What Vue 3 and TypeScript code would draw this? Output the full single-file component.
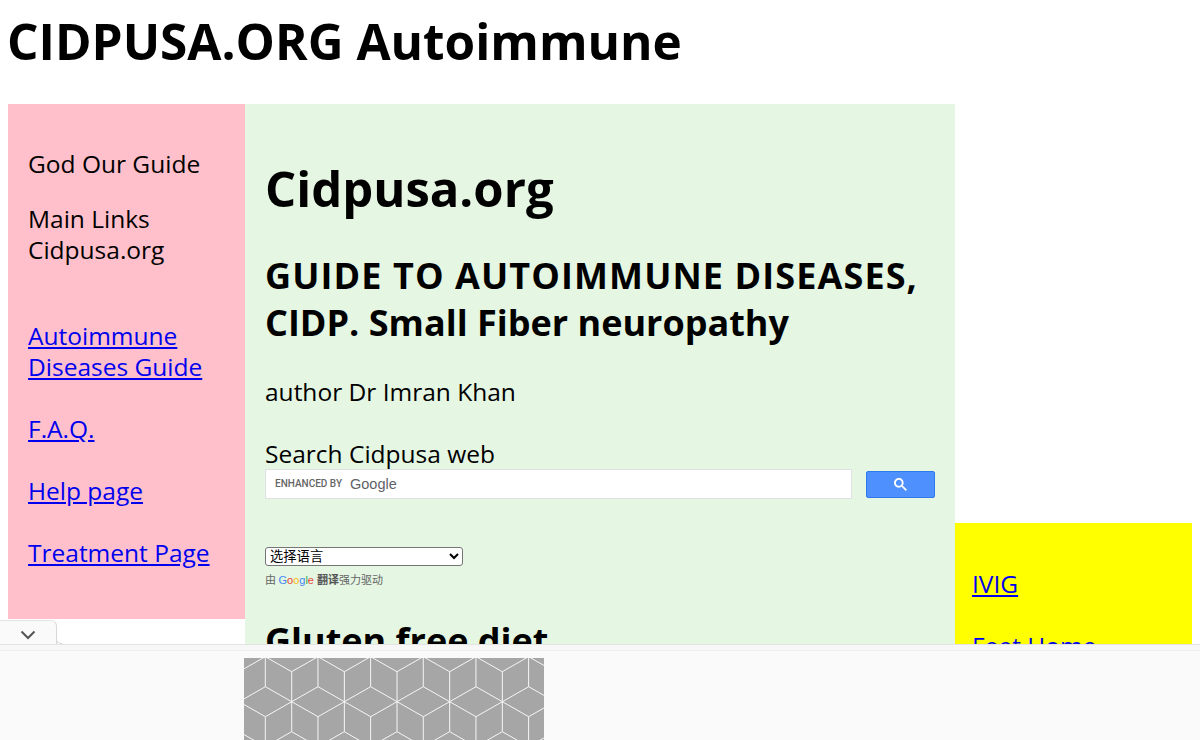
<template>
  <div class="page">
    <h1 class="site-title">CIDPUSA.ORG Autoimmune</h1>

    <div class="columns">
      <!-- left nav -->
      <aside class="left">
        <p>God Our Guide</p>
        <p>Main Links<br />Cidpusa.org<br /><br /></p>
        <p>
          <a href="#">Autoimmune Diseases Guide</a><br /><br />
          <a href="#">F.A.Q.</a><br /><br />
          <a href="#">Help page</a><br /><br />
          <a href="#">Treatment Page</a>
        </p>
      </aside>

      <main class="center">
        <h1 class="main-title">Cidpusa.org</h1>
        <h2><span class="caps">GUIDE TO AUTOIMMUNE DISEASES,</span> CIDP. Small Fiber neuropathy</h2>
        <p>author Dr Imran Khan</p>
        <div class="search-label">Search Cidpusa web</div>
        <div class="search">
          <div class="search-box">
            <span class="enhanced">ENHANCED BY</span>
            <span class="google-gray">Google</span>
          </div>
          <button class="search-btn" aria-label="search">
            <svg width="13" height="13" viewBox="0 0 13 13">
              <path fill="#fff" d="m4.8495 7.8226c0.82666 0 1.5262-0.29146 2.0985-0.87438 0.57232-0.58292 0.86378-1.2877 0.87438-2.1144 0.010599-0.82666-0.28086-1.5262-0.87438-2.0985-0.59352-0.57232-1.293-0.86378-2.0985-0.87438-0.8055-0.010599-1.5103 0.28086-2.1144 0.87438-0.60414 0.59352-0.8956 1.293-0.87438 2.0985 0.021197 0.8055 0.31266 1.5103 0.87438 2.1144 0.56172 0.60414 1.2665 0.8956 2.1144 0.87438zm4.4695 0.2115 3.681 3.6819-1.259 1.284-3.6817-3.7 0.0019784-0.69479-0.090043-0.098846c-0.87973 0.76087-1.92 1.1413-3.1207 1.1413-1.3553 0-2.5025-0.46363-3.4417-1.3909s-1.4088-2.0686-1.4088-3.4239c0-1.3553 0.4696-2.4966 1.4088-3.4239 0.9392-0.92727 2.0864-1.3969 3.4417-1.4088 1.3553-0.011889 2.4906 0.45771 3.406 1.4088 0.9154 0.95107 1.379 2.0924 1.3909 3.4239 0 1.2126-0.38043 2.2588-1.1413 3.1385l0.098834 0.090049z"/>
            </svg>
          </button>
        </div>

        <div class="translate">
          <select class="lang">
            <option>选择语言</option>
          </select>
          <div class="powered">
            由 <span class="g-logo"><i class="b">G</i><i class="r">o</i><i class="y">o</i><i class="b">g</i><i class="g">l</i><i class="r">e</i></span>
            <b>翻译</b>强力驱动
          </div>
        </div>

        <h2 class="gluten">Gluten free diet</h2>
      </main>

      <aside class="right">
        <p>
          <a href="#">IVIG</a><br /><br />
          <a href="#">Feet Home</a>
        </p>
      </aside>
    </div>

    <!-- anchor ad over the bottom of the page -->
    <div class="anchor">
      <div class="anchor-tab">
        <svg width="16" height="10" viewBox="0 0 16 10">
          <path d="M1.5 1.5 8 8l6.5-6.5" fill="none" stroke="#555" stroke-width="2" />
        </svg>
      </div>
      <div class="anchor-strip"></div>
      <div class="anchor-body">
        <svg class="ad" width="300" height="82" viewBox="0 0 300 82">
          <rect width="300" height="82" fill="#a6a6a6" />
          <path :d="cubeLines" stroke="#f6f6f6" stroke-width="1" fill="none" />
        </svg>
      </div>
    </div>
  </div>
</template>

<script setup lang="ts">
// tumbling cube lines of the ad: six spokes round each node of a triangular grid
const dx = 26.33
const dy = 45
const spoke = 30

function buildCubeLines(): string {
  let d = ''
  for (let row = 0; row < 4; row++) {
    const y = -1.3 + row * dy
    const offset = row % 2 === 0 ? 21.3 : 47.7
    for (let col = -1; col < 7; col++) {
      const x = offset + col * dx * 2
      d += `M${x} ${y - spoke}V${y + spoke}`
      d += `M${x - dx} ${y - 15}L${x + dx} ${y + 15}`
      d += `M${x - dx} ${y + 15}L${x + dx} ${y - 15}`
    }
  }
  return d
}

const cubeLines = buildCubeLines()
</script>

<style>
html, body {
  margin: 0;
  background: #fff;
  overflow: hidden;
}
</style>

<style scoped>
.page {
  position: relative;
  height: 740px;
  overflow: hidden;
  padding: 0 8px;
  box-sizing: border-box;
  font-family: "Open Sans", "Noto Sans CJK SC", sans-serif;
  font-size: 24.5px;
  line-height: 31px;
  color: #000;
}

.site-title {
  margin: 0 0 0 -1px;
  padding-top: 10px;
  height: 104px;
  box-sizing: border-box;
  font-size: 49.5px;
  line-height: 62px;
  font-weight: 700;
}

.columns {
  display: flex;
  align-items: flex-start;
}

.left {
  width: 237px;
  height: 515px;
  box-sizing: border-box;
  padding: 20px;
  background: #ffc0cb;
}

.left p {
  margin: 24px 0;
}

a {
  color: #0000ee;
  text-decoration: underline;
}

.center {
  width: 710px;
  height: 640px;
  box-sizing: border-box;
  padding: 20px;
  background: #e5f6e3;
}

.main-title {
  margin: 32px 0 0;
  font-size: 49px;
  line-height: 64px;
  font-weight: 700;
}

h2 {
  margin: 32px 0 0;
  font-size: 36px;
  line-height: 47px;
  font-weight: 700;
}

.caps {
  letter-spacing: 1.1px;
}

.center p {
  margin: 30px 0 24px;
}

.search-label {
  margin-top: 31px;
}

.search {
  display: flex;
  align-items: center;
  gap: 14px;
}

.search-box {
  flex: 1;
  height: 30px;
  box-sizing: border-box;
  display: flex;
  align-items: center;
  gap: 8px;
  padding-left: 9px;
  background: #fff;
  border: 1px solid #dfe1e5;
}

.enhanced {
  font-family: Roboto, sans-serif;
  font-size: 10px;
  font-weight: 500;
  line-height: 12px;
  color: #666;
}

.google-gray {
  font-family: "Liberation Sans", sans-serif;
  font-size: 14.5px;
  line-height: 16px;
  color: #5f6368;
}

.search-btn {
  width: 69px;
  height: 27px;
  padding: 0;
  display: flex;
  align-items: center;
  justify-content: center;
  background: #4d90fe;
  border: 1px solid #3079ed;
  border-radius: 2px;
}

.translate {
  margin-top: 48px;
}

.lang {
  display: block;
  width: 198px;
  height: 19px;
  padding: 0;
  font-family: "Liberation Sans", "Noto Sans CJK SC", sans-serif;
  font-size: 13.3px;
  background: #fff;
  border: 1px solid #767676;
  border-radius: 3px;
  color: #000;
}

.powered {
  margin-top: 5px;
  font-family: "Noto Sans CJK SC", sans-serif;
  font-size: 11px;
  line-height: 16px;
  color: #666;
}

.powered b {
  margin-left: 3px;
  color: #555;
}

.g-logo i {
  font-family: "Liberation Sans", sans-serif;
  font-style: normal;
  font-size: 11px;
}
.g-logo .b { color: #4285f4; }
.g-logo .r { color: #ea4335; }
.g-logo .y { color: #fbbc05; }
.g-logo .g { color: #34a853; }

.gluten {
  margin-top: 29px;
}

.right {
  width: 237px;
  height: 200px;
  margin-top: 419px;
  box-sizing: border-box;
  padding: 21px 17px;
  background: #ff0;
}

.right p {
  margin: 24px 0;
}

.anchor {
  position: absolute;
  left: 0;
  right: 0;
  bottom: 0;
}

.anchor-tab {
  position: relative;
  width: 57px;
  height: 24px;
  display: flex;
  align-items: center;
  justify-content: center;
  box-sizing: border-box;
  padding-top: 5px;
  background: #fafafa;
  border-top: 1px solid #e4e4e4;
  border-right: 1px solid #d8d8d8;
  border-top-right-radius: 6px;
}

/* small fold where the tab meets the bar */
.anchor-tab::after {
  content: "";
  position: absolute;
  left: 100%;
  bottom: 0;
  width: 5px;
  height: 5px;
  border-left: 1px solid #d8d8d8;
  border-bottom: 1px solid #d8d8d8;
  border-bottom-left-radius: 5px;
}

.anchor-strip {
  height: 7px;
  box-sizing: border-box;
  background: #f7f7f7;
  border-top: 1px solid #e4e4e4;
  border-bottom: 1px solid #eee;
}

.anchor-body {
  height: 89px;
  box-sizing: border-box;
  padding: 7px 0 0 244px;
  background: #fafafa;
}

.ad {
  display: block;
}
</style>
